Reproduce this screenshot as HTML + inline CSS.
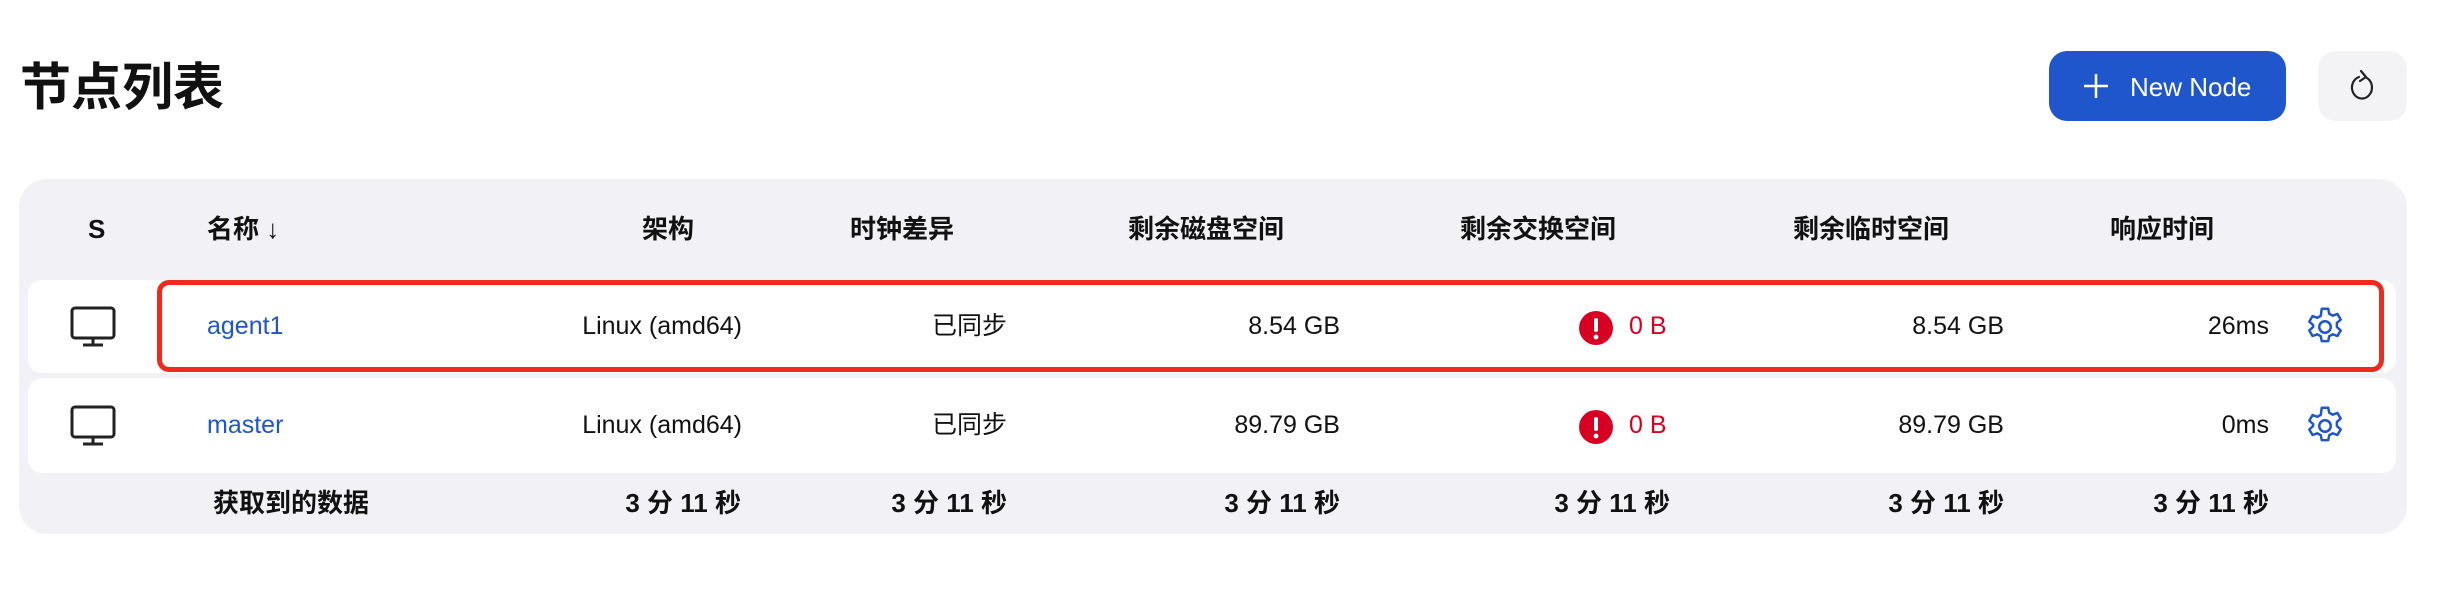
<!DOCTYPE html>
<html><head><meta charset="utf-8"><style>
body{margin:0;width:2440px;height:614px;background:#fff;font-family:"Liberation Sans","Noto Sans CJK SC",sans-serif;color:#111;position:relative;overflow:hidden}
.a{position:absolute;white-space:nowrap;line-height:1}
.t{font-size:25px}
.h{font-size:26px;font-weight:600}
.r{text-align:right}
.blue{color:#1f56cc}
.red{color:#d70022}
</style></head><body>
<div class="a" style="left:20px;top:62px;font-size:51px;font-weight:700">节点列表</div>
<div class="a" style="left:2049px;top:51px;width:237px;height:70px;background:#1f56cc;border-radius:18px;color:#fff;font-size:26px;font-weight:500">
<svg style="position:absolute;left:34px;top:22px" width="26" height="26" viewBox="0 0 26 26"><path d="M13 1V25M1 13H25" stroke="#fff" stroke-width="2.5"/></svg>
<span style="position:absolute;left:81px;top:23px">New Node</span></div>
<div class="a" style="left:2318px;top:51px;width:89px;height:70px;background:#f3f3f5;border-radius:18px">
<svg style="position:absolute;left:29px;top:17px" width="32" height="38" viewBox="0 0 32 38"><path d="M20 10A10 11 0 1 1 12 9" fill="none" stroke="#222" stroke-width="2.2" stroke-linecap="round"/><path d="M14 3L19 9L13 13" fill="none" stroke="#222" stroke-width="2.2" stroke-linecap="round" stroke-linejoin="round"/></svg></div>

<div class="a" style="left:19px;top:179px;width:2388px;height:355px;background:#f2f2f6;border-radius:28px"></div>
<div class="a" style="left:28px;top:280px;width:2368px;height:93px;background:#fff;border-radius:14px"></div>
<div class="a" style="left:28px;top:378px;width:2368px;height:95px;background:#fff;border-radius:14px"></div>
<div class="a" style="left:157px;top:280px;width:2227px;height:92px;border:5px solid #f0281e;border-radius:12px;box-sizing:border-box"></div>

<div class="a h" style="left:88px;top:216px">S</div>
<div class="a h" style="left:207px;top:216px">名称 <span style="font-weight:400">↓</span></div>
<div class="a h r" style="right:1746px;top:216px">架构</div>
<div class="a h" style="left:850px;top:216px">时钟差异</div>
<div class="a h" style="left:1128px;top:216px">剩余磁盘空间</div>
<div class="a h" style="left:1460px;top:216px">剩余交换空间</div>
<div class="a h" style="left:1793px;top:216px">剩余临时空间</div>
<div class="a h" style="left:2110px;top:216px">响应时间</div>

<svg class="a" style="left:70px;top:306px" width="46" height="42" viewBox="0 0 46 42"><rect x="2" y="2" width="42" height="30" rx="3" fill="none" stroke="#222" stroke-width="3"/><path d="M23 32V38M13 39H33" stroke="#222" stroke-width="3"/></svg>
<svg class="a" style="left:70px;top:405px" width="46" height="42" viewBox="0 0 46 42"><rect x="2" y="2" width="42" height="30" rx="3" fill="none" stroke="#222" stroke-width="3"/><path d="M23 32V38M13 39H33" stroke="#222" stroke-width="3"/></svg>

<div class="a t blue" style="left:207px;top:314px">agent1</div>
<div class="a t r" style="right:1698px;top:314px">Linux (amd64)</div>
<div class="a t r" style="right:1433px;top:314px">已同步</div>
<div class="a t r" style="right:1100px;top:314px">8.54 GB</div>
<div class="a t red" style="left:1629px;top:314px">0 B</div>
<div class="a t r" style="right:436px;top:314px">8.54 GB</div>
<div class="a t r" style="right:171px;top:314px">26ms</div>

<div class="a t blue" style="left:207px;top:413px">master</div>
<div class="a t r" style="right:1698px;top:413px">Linux (amd64)</div>
<div class="a t r" style="right:1433px;top:413px">已同步</div>
<div class="a t r" style="right:1100px;top:413px">89.79 GB</div>
<div class="a t red" style="left:1629px;top:413px">0 B</div>
<div class="a t r" style="right:436px;top:413px">89.79 GB</div>
<div class="a t r" style="right:171px;top:413px">0ms</div>

<svg class="a" style="left:1578px;top:310px" width="36" height="36" viewBox="0 0 36 36"><circle cx="18" cy="18" r="17" fill="#d70022"/><rect x="16" y="8" width="4" height="14" rx="2" fill="#fff"/><circle cx="18" cy="27" r="2.4" fill="#fff"/></svg>
<svg class="a" style="left:1578px;top:409px" width="36" height="36" viewBox="0 0 36 36"><circle cx="18" cy="18" r="17" fill="#d70022"/><rect x="16" y="8" width="4" height="14" rx="2" fill="#fff"/><circle cx="18" cy="27" r="2.4" fill="#fff"/></svg>

<svg class="a" style="left:2302px;top:304px" width="46" height="46" viewBox="0 0 24 24"><path fill="none" stroke="#1f56cc" stroke-width="1.3" stroke-linejoin="round" d="M10.3 2.5h3.4l.5 2.6 1.8 1 2.5-.9 1.7 2.9-2 1.8v2.1l2 1.8-1.7 2.9-2.5-.9-1.8 1-.5 2.6h-3.4l-.5-2.6-1.8-1-2.5.9-1.7-2.9 2-1.8V11l-2-1.8 1.7-2.9 2.5.9 1.8-1z"/><circle cx="12" cy="12" r="3" fill="none" stroke="#1f56cc" stroke-width="1.3"/></svg>
<svg class="a" style="left:2302px;top:403px" width="46" height="46" viewBox="0 0 24 24"><path fill="none" stroke="#1f56cc" stroke-width="1.3" stroke-linejoin="round" d="M10.3 2.5h3.4l.5 2.6 1.8 1 2.5-.9 1.7 2.9-2 1.8v2.1l2 1.8-1.7 2.9-2.5-.9-1.8 1-.5 2.6h-3.4l-.5-2.6-1.8-1-2.5.9-1.7-2.9 2-1.8V11l-2-1.8 1.7-2.9 2.5.9 1.8-1z"/><circle cx="12" cy="12" r="3" fill="none" stroke="#1f56cc" stroke-width="1.3"/></svg>

<div class="a h" style="left:213px;top:490px">获取到的数据</div>
<div class="a h r" style="right:1699px;top:490px">3 分 11 秒</div>
<div class="a h r" style="right:1433px;top:490px">3 分 11 秒</div>
<div class="a h r" style="right:1100px;top:490px">3 分 11 秒</div>
<div class="a h r" style="right:770px;top:490px">3 分 11 秒</div>
<div class="a h r" style="right:436px;top:490px">3 分 11 秒</div>
<div class="a h r" style="right:171px;top:490px">3 分 11 秒</div>
</body></html>
